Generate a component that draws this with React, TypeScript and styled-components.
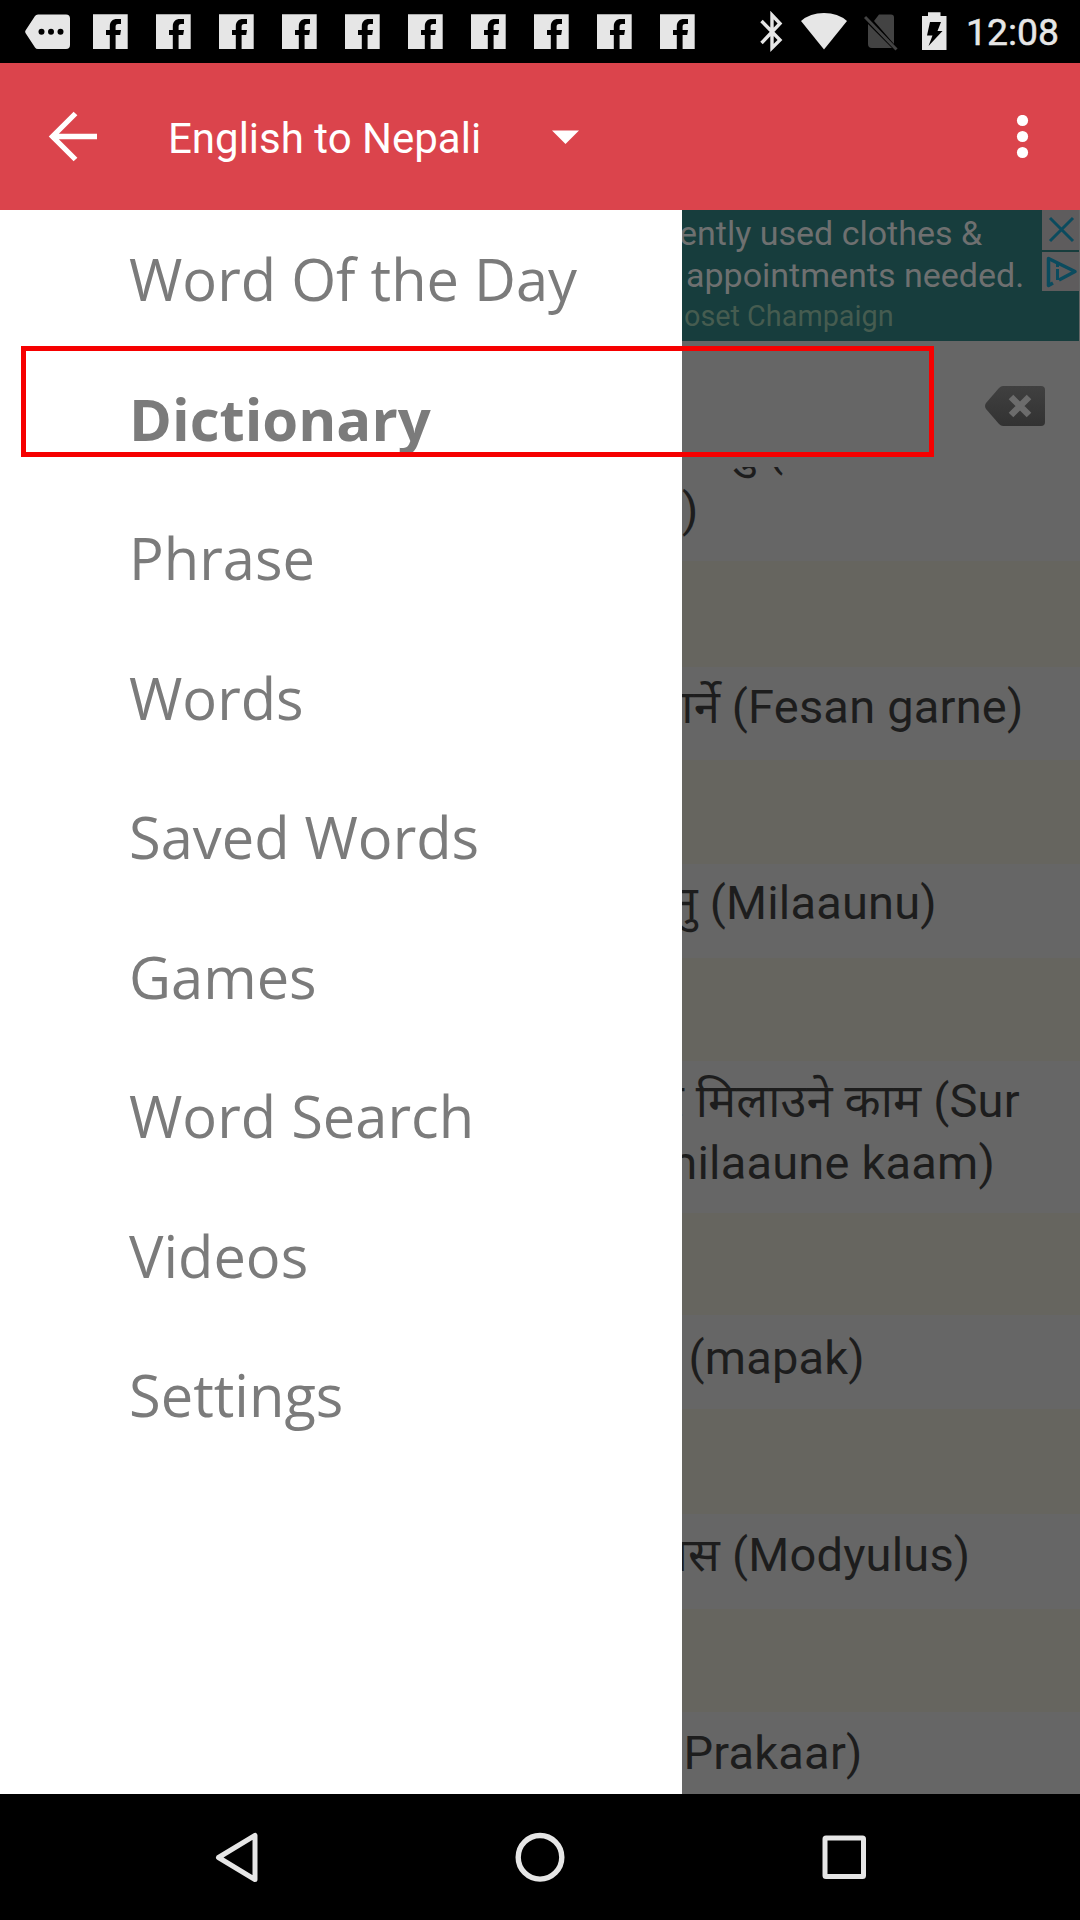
import React from "react";
import styled, { createGlobalStyle } from "styled-components";

const GlobalStyle = createGlobalStyle`
  body { margin: 0; background: #000; }
  * { box-sizing: border-box; }
`;

const Screen = styled.div`
  width: 1080px;
  height: 1920px;
  display: flex;
  flex-direction: column;
  overflow: hidden;
  font-family: Roboto, "Noto Sans Devanagari", "Noto Sans", sans-serif;
`;

const StatusBar = styled.header`
  height: 63px;
  flex: none;
  display: flex;
  align-items: flex-start;
  background: #000;
  color: #e6e6e6;
  padding: 10px 21px 0 24px;
`;

const Notifications = styled.div`
  display: flex;
  gap: 28px;
  margin-right: auto;
  svg { display: block; }
`;

const MessageSlot = styled.div`
  width: 41px;
  svg { overflow: visible; }
`;

const SystemIcons = styled.div`
  display: flex;
  gap: 17px;
  svg { display: block; }
`;

const Clock = styled.div`
  font-size: 37.3px;
  font-weight: 400;
  -webkit-text-stroke: 0.5px #e6e6e6;
  line-height: 45px;
  width: 93px;
  margin-left: 19.5px;
  white-space: nowrap;
`;

const Toolbar = styled.div`
  height: 147px;
  flex: none;
  display: flex;
  align-items: center;
  background: #db444c;
  color: #fff;
  padding: 0 50px 0 37px;
  svg { display: block; flex: none; }
`;

const Title = styled.div`
  font-size: 42px;
  line-height: 50px;
  margin: 4px 0 0 59px;
  width: 384px;
  white-space: nowrap;
`;

const Spacer = styled.div`
  flex: 1;
`;

const Body = styled.main`
  position: relative;
  height: 1584px;
  flex: none;
  display: flex;
`;

const Drawer = styled.nav`
  width: 682px;
  flex: none;
  background: #fff;
  display: flex;
  flex-direction: column;
  gap: 3px;
  padding-top: 1px;
`;

const MenuItem = styled.a<{ $active?: boolean }>`
  height: 136.5px;
  line-height: 136.5px;
  padding-left: 129px;
  font-family: "Open Sans", sans-serif;
  font-size: ${(p) => (p.$active ? 58 : 57.8)}px;
  font-weight: ${(p) => (p.$active ? 700 : 400)};
  color: #7b7b7b;
  white-space: nowrap;
`;

const Content = styled.section`
  flex: 1;
  min-width: 0;
  overflow: hidden;
  background: #666;
`;

const Ad = styled.div`
  height: 131px;
  margin-right: 1px;
  display: flex;
  justify-content: space-between;
  background: #173d3d;
  color: #6e7070;
`;

const AdCopy = styled.div`
  width: 358px;
  overflow: hidden;
  white-space: nowrap;
  padding-top: 2px;
`;

const AdLine = styled.div<{ $indent: number }>`
  font-size: 34px;
  line-height: 42px;
  text-indent: ${(p) => p.$indent}px;
`;

const AdSource = styled(AdLine)`
  font-size: 28.8px;
  line-height: 40px;
  color: #465c50;
`;

const AdButtons = styled.div`
  width: 37px;
  display: flex;
  flex-direction: column;
  gap: 2px;
`;

const AdButton = styled.div`
  height: 39.5px;
  background: #5e5c5d;
  svg { display: block; }
`;

const SearchRow = styled.div`
  height: 126px;
  display: flex;
  justify-content: flex-end;
  align-items: center;
  padding: 4px 34px 0 0;
`;

const Definition = styled.div<{ $height: number; $top: number }>`
  height: ${(p) => p.$height}px;
  overflow: hidden;
  color: #1d1d1d;
  font-size: 47px;
  letter-spacing: 0.2px;
  white-space: nowrap;
  &::before {
    content: "";
    display: block;
    margin-top: ${(p) => p.$top}px;
  }
`;

const Line = styled.div<{ $indent: number }>`
  line-height: 61.4px;
  height: 61.4px;
  text-indent: ${(p) => p.$indent}px;
`;

const Term = styled.div<{ $height: number }>`
  height: ${(p) => p.$height}px;
  background: #66655f;
`;

const Highlight = styled.div`
  position: absolute;
  left: 21px;
  top: 136px;
  width: 913px;
  height: 111px;
  border: 5px solid #f60000;
`;

const NavBar = styled.footer`
  height: 126px;
  flex: none;
  background: #000;
  display: flex;
  align-items: center;
  justify-content: space-between;
  padding: 0 205px;
  svg { display: block; }
`;

const MessageIcon = () => (
  <svg width="46" height="44" viewBox="0 0 46 44">
    <path d="M14 4.500H42Q46 4.500 46 8.500V35Q46 39 42 39H14Q12 39 11 37.500L1.500 23Q.7 21.700 1.500 20.500L11 6Q12 4.500 14 4.500Z" fill="#e6e6e6" />
    <circle cx="17.500" cy="21.700" r="3" />
    <circle cx="27" cy="21.700" r="3" />
    <circle cx="36.500" cy="21.700" r="3" />
  </svg>
);

const FacebookIcon = () => (
  <svg width="35" height="44" viewBox="0 0 35 44">
    <path d="M0 4.300H34.700V39H0Z" fill="#e6e6e6" />
    <path d="M16.800 39V24.900H13V20H16.800V16.500C16.800 11.500 19.600 9 24 9H28V14H25.200C23.200 14 22.600 15 22.600 16.900V20H28L27.200 24.900H22.600V39Z" fill="#000" />
  </svg>
);

const BluetoothIcon = () => (
  <svg width="24" height="44" viewBox="0 0 24 44">
    <path d="M1.500 11L20 30L12 38V5L20 13.500L1.500 33" fill="none" stroke="#e6e6e6" strokeWidth="3.400" />
  </svg>
);

const WifiIcon = () => (
  <svg width="46" height="44" viewBox="0 0 46 44">
    <path d="M23 39.500L0 11Q9 3 23 3T46 11Z" fill="#e6e6e6" />
  </svg>
);

const NoSimIcon = () => (
  <svg width="41" height="44" viewBox="0 0 41 44">
    <path d="M15 4.500H27Q30 4.500 30 7.500V34L10 11Z M4 14L28 38H8Q4 38 4 34Z" fill="#434343" />
    <path d="M1 7L32.500 39.500" stroke="#434343" strokeWidth="3" />
  </svg>
);

const BatteryIcon = () => (
  <svg width="25" height="44" viewBox="0 0 25 44">
    <path d="M6 2.300H18.500V6H24.500V40H0V6H6Z" fill="#e6e6e6" />
    <path d="M8 12H19L15.500 21H20.500L6.500 36L10.500 25.500H5Z" fill="#000" />
  </svg>
);

const BackspaceIcon = () => (
  <svg width="62" height="42" viewBox="0 0 62 42">
    <defs>
      <linearGradient id="key" x1="0" y1="0" x2="0" y2="1">
        <stop offset="0" stopColor="#404040" />
        <stop offset="1" stopColor="#323232" />
      </linearGradient>
    </defs>
    <path d="M19 1H57Q61 1 61 5V37Q61 41 57 41H19Q17 41 15 39L2 24Q0 21 2 18L15 3Q17 1 19 1Z" fill="url(#key)" />
    <path d="M27 12L45 30M45 12L27 30" stroke="#6c6c6c" strokeWidth="6.500" />
  </svg>
);

const menu = [
  "Word Of the Day",
  "Dictionary",
  "Phrase",
  "Words",
  "Saved Words",
  "Games",
  "Word Search",
  "Videos",
  "Settings",
];

type Entry = { height: number; top: number; term: number; lines: [string, number][] };

const entries: Entry[] = [
  { height: 93.5, top: -49, term: 106, lines: [["नु (", 47], [")", 0]] },
  { height: 93.5, top: 9.3, term: 103.5, lines: [["गर्ने (Fesan garne)", -15]] },
  { height: 94.5, top: 8.9, term: 102.5, lines: [["नु (Milaaunu)", -10.5]] },
  { height: 152, top: 9.7, term: 102.5, lines: [["र मिलाउने काम (Sur", -17.5], ["milaaune kaam)", -26]] },
  { height: 94, top: 11.6, term: 105, lines: [["(mapak)", 6.5]] },
  { height: 95, top: 9.6, term: 103, lines: [["लस (Modyulus)", -26]] },
  { height: 83, top: 9.9, term: 0, lines: [["Prakaar)", 1.5]] },
];

export default function App() {
  return (
    <Screen>
      <GlobalStyle />
      <StatusBar>
        <Notifications>
          <MessageSlot>
            <MessageIcon />
          </MessageSlot>
          {Array.from({ length: 10 }, (_, i) => (
            <FacebookIcon key={i} />
          ))}
        </Notifications>
        <SystemIcons>
          <BluetoothIcon />
          <WifiIcon />
          <NoSimIcon />
          <BatteryIcon />
        </SystemIcons>
        <Clock>12:08</Clock>
      </StatusBar>
      <Toolbar>
        <svg width="72" height="72" viewBox="0 0 72 72" fill="none" stroke="#fff" strokeWidth="5.300">
          <path d="M38.500 12.500L15.500 35.500L38.500 58.500M15.500 35.500H60" />
        </svg>
        <Title>English to Nepali</Title>
        <svg width="27" height="14" viewBox="0 0 27 14">
          <path d="M0 .5H27L13.500 14Z" fill="#fff" />
        </svg>
        <Spacer />
        <svg width="15" height="44" viewBox="0 0 15 44" fill="#fff">
          <circle cx="7.500" cy="5.500" r="5.600" />
          <circle cx="7.500" cy="21.500" r="5.600" />
          <circle cx="7.500" cy="37.500" r="5.600" />
        </svg>
      </Toolbar>
      <Body>
        <Drawer>
          {menu.map((label) => (
            <MenuItem key={label} $active={label === "Dictionary"}>
              {label}
            </MenuItem>
          ))}
        </Drawer>
        <Content>
          <Ad>
            <AdCopy>
              <AdLine $indent={-3}>ently used clothes &amp;</AdLine>
              <AdLine $indent={4}>appointments needed.</AdLine>
              <AdSource $indent={2}>oset Champaign</AdSource>
            </AdCopy>
            <AdButtons>
              <AdButton>
                <svg width="37" height="39" viewBox="0 0 37 39">
                  <path d="M8 8L31 31M31 8L8 31" stroke="#0b4b5e" strokeWidth="3" />
                </svg>
              </AdButton>
              <AdButton>
                <svg width="37" height="39" viewBox="0 0 37 39" fill="none" stroke="#0b4b5e" strokeWidth="3">
                  <path d="M11 31L6.500 33.500V6.500L33 19.500L17 28" strokeLinejoin="round" strokeWidth="3.500" />
                  <path d="M15.500 17V28M15.500 12V15" />
                </svg>
              </AdButton>
            </AdButtons>
          </Ad>
          <SearchRow>
            <BackspaceIcon />
          </SearchRow>
          {entries.map((e, i) => (
            <React.Fragment key={i}>
              <Definition $height={e.height} $top={e.top}>
                {e.lines.map(([text, indent]) => (
                  <Line key={text} $indent={indent}>
                    {text}
                  </Line>
                ))}
              </Definition>
              <Term $height={e.term} />
            </React.Fragment>
          ))}
        </Content>
        <Highlight />
      </Body>
      <NavBar>
        <svg width="64" height="60" viewBox="0 0 64 60">
          <path d="M13.500 30.500L50 8.500V52.500Z" fill="none" stroke="#e6e6e6" strokeWidth="5" strokeLinejoin="round" />
        </svg>
        <svg width="64" height="60" viewBox="0 0 64 60">
          <circle cx="32" cy="30.300" r="21.800" fill="none" stroke="#e6e6e6" strokeWidth="5.400" />
        </svg>
        <svg width="64" height="60" viewBox="0 0 64 60">
          <rect x="14" y="11" width="38.500" height="38.500" rx="1" fill="none" stroke="#e6e6e6" strokeWidth="5" />
        </svg>
      </NavBar>
    </Screen>
  );
}
